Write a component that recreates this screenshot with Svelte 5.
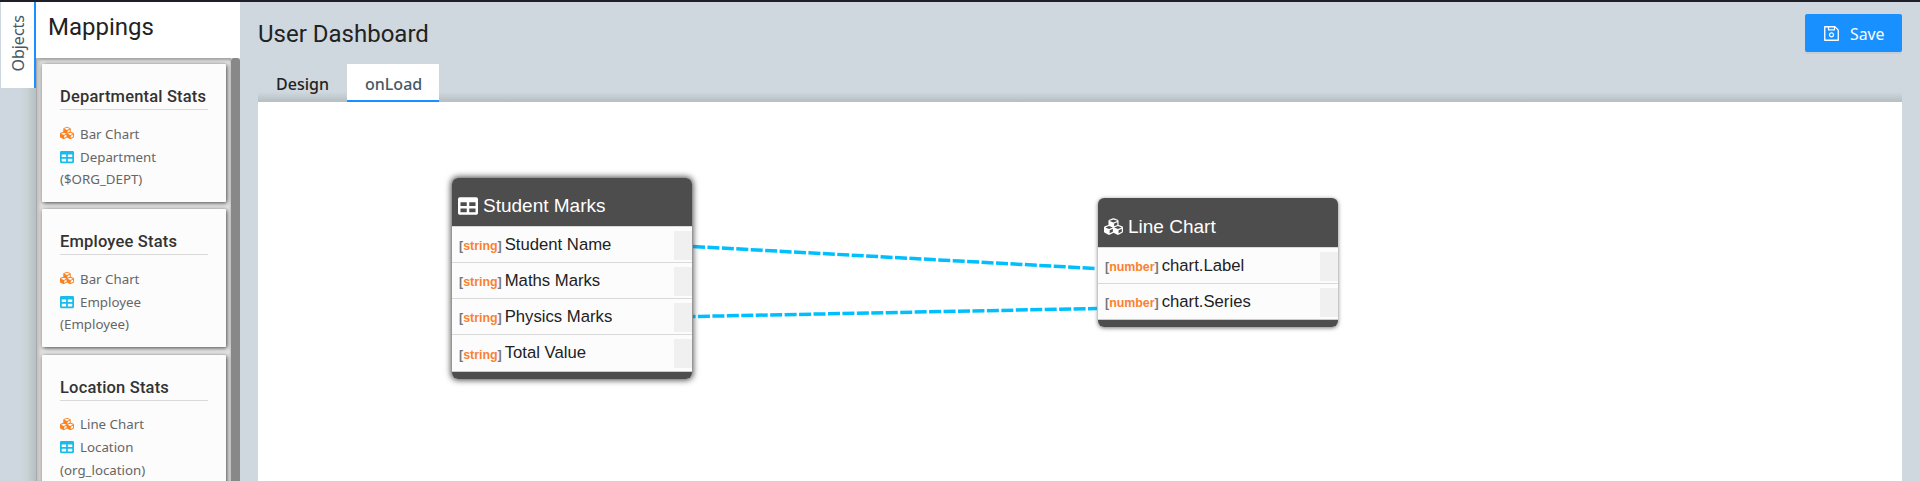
<script>
  const mappings = [
    { title: 'Departmental Stats', chart: 'Bar Chart', source: 'Department', key: '($ORG_DEPT)' },
    { title: 'Employee Stats', chart: 'Bar Chart', source: 'Employee', key: '(Employee)' },
    { title: 'Location Stats', chart: 'Line Chart', source: 'Location', key: '(org_location)' }
  ];
  const nodes = [
    { title: 'Student Marks', icon: 'table', type: 'string', x: 194, y: 76.5, w: 240, head: 48.5,
      fields: ['Student Name', 'Maths Marks', 'Physics Marks', 'Total Value'] },
    { title: 'Line Chart', icon: 'cubes', type: 'number', x: 840, y: 97, w: 240, head: 49,
      fields: ['chart.Label', 'chart.Series'] }
  ];
</script>

{#snippet cubes()}
  <svg class="icon cubes" viewBox="0 0 512 512"><path d="M488.6 250.2L392 214V105.5c0-15-9.3-28.4-23.4-33.7l-100-37.5c-8.1-3.1-17.1-3.1-25.3 0l-100 37.5c-14.1 5.3-23.4 18.7-23.4 33.7V214l-96.6 36.2C9.3 255.5 0 268.9 0 283.9V394c0 13.6 7.7 26.1 19.9 32.2l100 50c10.1 5.1 22.1 5.1 32.2 0l103.9-52 103.9 52c10.1 5.1 22.1 5.1 32.2 0l100-50c12.2-6.1 19.9-18.6 19.9-32.2V283.9c0-15-9.3-28.4-23.4-33.7zM358 214.8l-85 31.9v-68.2l85-37v73.3zM154 104.1l102-38.2 102 38.2v.6l-102 41.4-102-41.4v-.6zm84 291.1l-85 42.5v-79.1l85-38.8v75.4zm0-112l-102 41.4-102-41.4v-.6l102-38.2 102 38.2v.6zm240 112l-85 42.5v-79.1l85-38.8v75.4zm0-112l-102 41.4-102-41.4v-.6l102-38.2 102 38.2v.6z" /></svg>
{/snippet}

{#snippet table()}
  <svg class="icon table" viewBox="0 0 512 512"><path d="M464 32H48C21.49 32 0 53.49 0 80v352c0 26.51 21.49 48 48 48h416c26.51 0 48-21.49 48-48V80c0-26.51-21.49-48-48-48zM224 416H64v-96h160v96zm0-160H64v-96h160v96zm224 160H288v-96h160v96zm0-160H288v-96h160v96z" /></svg>
{/snippet}

<div class="app">
  <div class="rail"><div class="rail-tab"><span>Objects</span></div></div>

  <aside>
    <h2>Mappings</h2>
    <div class="body">
      <div class="list">
        {#each mappings as m}
          <div class="card">
            <h3>{m.title}</h3>
            <div class="line first">{@render cubes()}<span>{m.chart}</span></div>
            <div class="line">{@render table()}<span>{m.source}</span></div>
            <div class="line last">{m.key}</div>
          </div>
        {/each}
      </div>
      <div class="scroll"></div>
    </div>
  </aside>

  <main>
    <header>
      <h1>User Dashboard</h1>
      <button>
        <svg viewBox="0 0 1024 1024"><path d="M893.3 293.3L730.7 130.7c-7.5-7.5-16.7-13-26.7-16V112H144c-17.7 0-32 14.3-32 32v736c0 17.7 14.3 32 32 32h736c17.7 0 32-14.3 32-32V338.5c0-17-6.7-33.2-18.7-45.2zM384 184h256v104H384V184zm456 656H184V184h136v136c0 17.7 14.3 32 32 32h320c17.7 0 32-14.3 32-32V205.8l136 136V840zM512 442c-79.5 0-144 64.5-144 144s64.5 144 144 144 144-64.5 144-144-64.5-144-144-144zm0 224c-44.2 0-80-35.8-80-80s35.8-80 80-80 80 35.8 80 80-35.8 80-80 80z" /></svg>
        <span>Save</span>
      </button>
    </header>
    <nav>
      <div class="tab">Design</div>
      <div class="tab active">onLoad</div>
    </nav>
    <div class="canvas">
      <svg class="links" width="1644" height="380">
        <line x1="435" y1="145.5" x2="838" y2="167.5" />
        <line x1="435" y1="215.5" x2="839" y2="207.5" stroke-dashoffset="9.5" />
      </svg>
      {#each nodes as n}
        <div class="node {n.type}" style="left:{n.x}px;top:{n.y}px;width:{n.w}px">
          <div class="head" style="height:{n.head}px">
            {#if n.icon === 'table'}{@render table()}{:else}{@render cubes()}{/if}
            <span>{n.title}</span>
          </div>
          {#each n.fields as f}
            <div class="field">
              <span class="type">[<b>{n.type}</b>]</span><span class="name">{f}</span>
              <i></i>
            </div>
          {/each}
          <div class="foot"></div>
        </div>
      {/each}
    </div>
  </main>
</div>

<style>
  :global(body) { margin: 0; overflow: hidden; }
  * { box-sizing: border-box; }
  h1, h2, h3 { margin: 0; font-family: Roboto, sans-serif; }
  .app { display: flex; height: 481px; border-top: 2px solid #1e1f27; background: #cfd8de; font-family: "Noto Sans", sans-serif; overflow: hidden; }
  .rail { width: 36px; padding-left: 1px; background: linear-gradient(to right, #ced7df 20px, #c9d2d5 27px, #b5c0c4 36px); }
  .rail-tab { height: 86px; background: #fff; border-right: 2px solid #1890ff; display: flex; align-items: center; justify-content: center; }
  .rail-tab span { writing-mode: vertical-rl; transform: rotate(180deg); font-size: 16px; line-height: 20px; color: #455a64; margin-bottom: 3px; }
  aside { width: 204px; display: flex; flex-direction: column; }
  h2 { height: 56px; background: #fff; padding: 10px 0 0 12px; font-size: 24px; line-height: 30px; font-weight: 400; color: #222; }
  .body { flex: 1; min-height: 0; display: flex; background: #e6e6e6; }
  .list { flex: 1; padding: 6px 5px 0 6px; display: flex; flex-direction: column; gap: 7.4px; overflow: hidden; box-shadow: inset 1px 0 #aaa, inset 5px 0 4px -2px #bbb, inset 0 2px 3px #999; }
  .scroll { width: 9px; background: #888; border-radius: 3px 3px 0 0; }
  .card { flex: none; height: 138px; padding: 0 18px; background: #fcfcfc; border-radius: 1px; box-shadow: 1px 1px 4px #444; }
  h3 { height: 46px; padding-top: 22px; font-size: 16.5px; line-height: 21px; font-weight: 500; color: #333; border-bottom: 1px solid #d9d9d9; letter-spacing: 0.18px; white-space: nowrap; }
  .line { display: flex; align-items: center; height: 23px; font-size: 13.3px; color: #666; }
  .line span { margin-top: -2px; }
  .last { height: 20px; }
  .first { margin-top: 13px; }
  .line .icon { width: 14px; height: 14px; margin-right: 6px; }
  .line .cubes { fill: #fa8120; margin-top: -3px; }
  .line .table { fill: #18bdec; margin-top: -2px; }
  main { flex: 1; padding: 0 18px; display: flex; flex-direction: column; }
  header { display: flex; justify-content: space-between; height: 62px; padding-top: 12px; }
  h1 { font-size: 24px; line-height: 40px; font-weight: 400; color: #222; }
  button { width: 97px; height: 38px; padding: 0 0 0 17px; border: 0; border-radius: 2px; background: #1890ff; color: #fff; display: flex; align-items: center; font: 15.8px "Noto Sans", sans-serif; box-shadow: 0 2px 0 rgba(0,0,0,.045); }
  button span { margin-top: 1px; }
  button svg { width: 19px; height: 19px; fill: #fff; margin-right: 9px; }
  nav { display: flex; height: 38px; position: relative; z-index: 1; background: linear-gradient(to bottom, transparent 28px, #b7c1c4 37px); }
  .tab { padding: 0 18px; font-size: 16px; line-height: 40px; height: 38px; font-weight: 500; color: #222; width: 89px; white-space: nowrap; }
  .active { width: 92px; background: #fff; border-bottom: 2px solid #1890ff; color: #455a64; }
  .canvas { flex: 1; margin-top: -1px; background: #fff; position: relative; }
  .links { position: absolute; left: 0; top: 0; }
  .links line { stroke: #00bfff; stroke-width: 3.5; stroke-dasharray: 12 2.45; }
  .node { position: absolute; border-radius: 6px; overflow: hidden; background: #fcfcfc; font-family: "Liberation Sans", sans-serif; }
  .string { box-shadow: 0 0 6px 1px #444; }
  .number { box-shadow: 0 1px 4px #777; }
  .head { display: flex; align-items: center; padding: 8px 0 0 6px; background: #4d4d4d; color: #fff; font-size: 19px; }
  .head .icon { width: 20px; height: 20px; fill: #fff; margin-right: 5px; }
  .number .head .icon { width: 19px; height: 19px; }
  .field { display: flex; align-items: center; height: 36px; padding-left: 7px; border-top: 1px solid #d9d9d9; font-size: 16.7px; color: #222; }
  .string .field:nth-last-child(2) { height: 37px; }
  .type { color: #777; font-weight: 700; font-size: 12.4px; margin: 3px 3px 0 0; }
  .type b { color: #fa8132; }
  .field i { width: 18px; height: 29px; margin-left: auto; background: #f0f0f0; margin-top: 1px; }
  .foot { height: 7.5px; background: #4d4d4d; border-top: 1px solid #ccc; }
</style>
